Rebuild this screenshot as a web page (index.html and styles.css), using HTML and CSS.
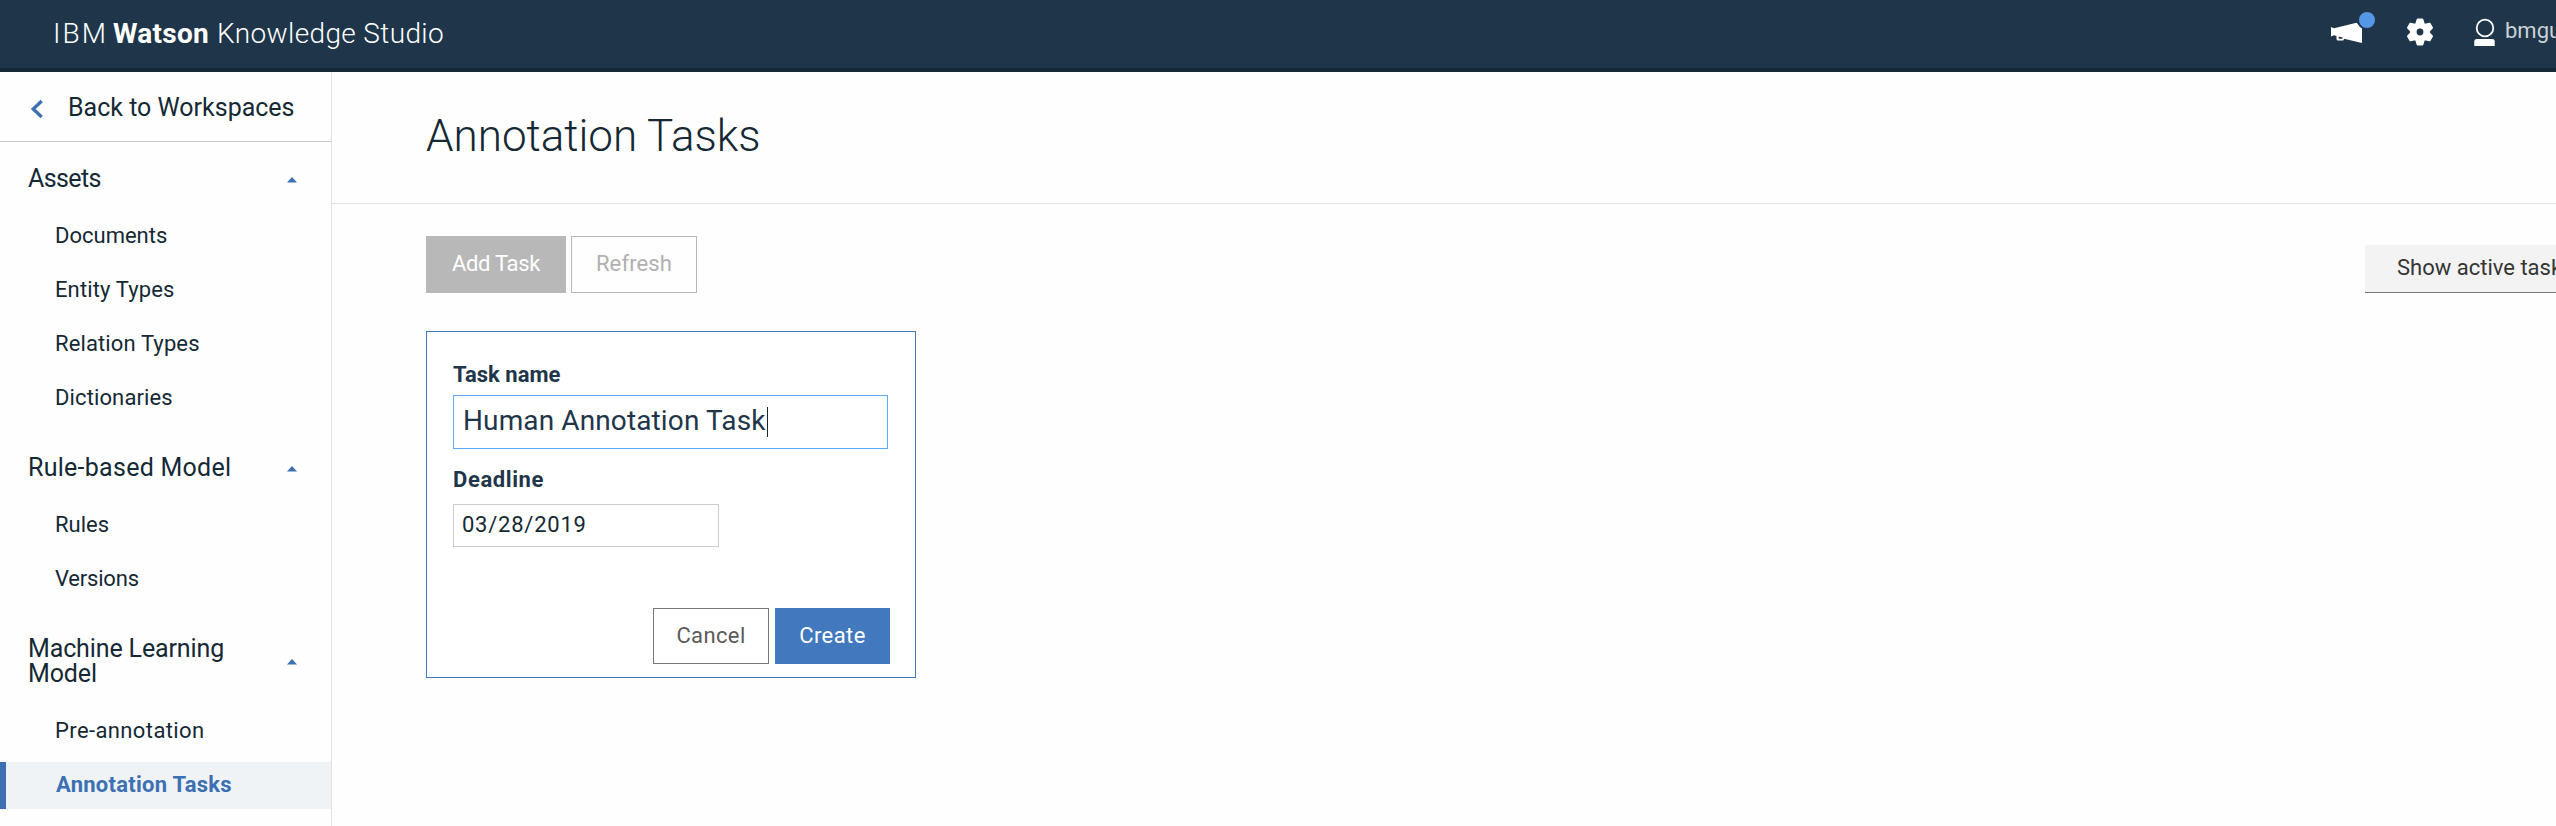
FILE: index.html
```
<!DOCTYPE html>
<html lang="en">
<head>
<meta charset="utf-8">
<title>IBM Watson Knowledge Studio</title>
<link rel="stylesheet" href="styles.css">
</head>
<body>
<header class="topbar">
  <div class="brand"><span class="brand-ibm">IBM</span><strong class="brand-watson">Watson</strong><span class="brand-product">Knowledge Studio</span></div>
  <div class="topbar-tools">
    <svg class="icon-news" width="50" height="40" viewBox="0 0 50 40">
      <path fill="#fff" d="M3 19l3 1.2L28.5 14.7 34 19v16L16 30.7V31q0 1.500-1.500 1.500h-4.500q-1.500 0-1.500-1.500v-3L6 27.300l-3 1.200z"/>
      <path fill="#1f364a" d="M10.700 28.500l3.800.9v1.300h-3.800z"/>
      <circle cx="39" cy="12" r="9" fill="#5596e6" stroke="#1f364a" stroke-width="2"/>
    </svg>
    <svg class="icon-gear" width="32" height="32" viewBox="-16 -16 32 32">
      <g fill="#fff">
        <circle r="9.600"/>
        <path id="teeth" d="M-2.500-13.500h5q.6 0 .8.800L4.800-8v16l-1.500 4.700q-.2.800-.8.800h-5q-.6 0-.8-.8L-4.800 8V-8l1.500-4.700q.2-.8.8-.8z"/>
        <use href="#teeth" transform="rotate(60)"/>
        <use href="#teeth" transform="rotate(120)"/>
      </g>
      <circle r="3.400" fill="#1f364a"/>
    </svg>
    <svg class="icon-user" width="24" height="30" viewBox="0 0 24 30">
      <circle cx="12" cy="10" r="8.300" fill="none" stroke="#fff" stroke-width="1.800"/>
      <path fill="#fff" d="M1.300 28v-4.500q0-2.500 2.500-2.500h15.400q2.500 0 2.500 2.500V28z"/>
    </svg>
    <span class="user-name">bmgu</span>
  </div>
</header>
<div class="layout">
  <nav class="sidebar">
    <a class="back">
      <svg class="back-icon" width="14" height="20" viewBox="0 0 14 20"><path d="M11.700 2L3.200 10l8.500 8" fill="none" stroke="#3d70b2" stroke-width="3.300"/></svg>
      <span>Back to Workspaces</span>
    </a>
    <h2 class="group group-first"><span class="group-tight">Assets</span><svg class="caret" width="10" height="6" viewBox="0 0 10 6"><path d="M0 5.500L5 0l5 5.500z"/></svg></h2>
    <ul class="items">
      <li class="item">Documents</li>
      <li class="item wide">Entity Types</li>
      <li class="item wide">Relation Types</li>
      <li class="item wide">Dictionaries</li>
    </ul>
    <h2 class="group"><span class="group-wide">Rule-based Model</span><svg class="caret" width="10" height="6" viewBox="0 0 10 6"><path d="M0 5.500L5 0l5 5.500z"/></svg></h2>
    <ul class="items">
      <li class="item">Rules</li>
      <li class="item tight">Versions</li>
    </ul>
    <h2 class="group"><span>Machine Learning Model</span><svg class="caret" width="10" height="6" viewBox="0 0 10 6"><path d="M0 5.500L5 0l5 5.500z"/></svg></h2>
    <ul class="items">
      <li class="item wider">Pre-annotation</li>
      <li class="item active">Annotation Tasks</li>
    </ul>
  </nav>
  <main class="main">
    <div class="page-head"><h1>Annotation Tasks</h1></div>
    <div class="toolbar">
      <button class="btn btn-add">Add Task</button>
      <button class="btn btn-refresh">Refresh</button>
      <div class="filter">Show active tasks</div>
    </div>
    <section class="card">
      <label class="label label-name">Task name</label>
      <div class="field field-name"><span>Human Annotation Task</span><i class="text-cursor"></i></div>
      <label class="label label-date">Deadline</label>
      <div class="field field-date">03/28/2019</div>
      <div class="actions">
        <button class="btn btn-cancel">Cancel</button>
        <button class="btn btn-create">Create</button>
      </div>
    </section>
  </main>
</div>
</body>
</html>
```
FILE: styles.css
```
* { box-sizing: border-box; }
html, body { height: 100%; }
body {
  margin: 0;
  display: flex;
  flex-direction: column;
  overflow: hidden;
  background: #fefefe;
  color: #152935;
  font-family: Roboto, "Liberation Sans", sans-serif;
  font-size: 22px;
}
h1, h2, ul { margin: 0; padding: 0; list-style: none; font-weight: 400; }

/* Top bar */
.topbar {
  flex: none;
  display: flex;
  height: 72px;
  background: #1f364a;
  border-bottom: 4px solid #152935;
  color: #fff;
  overflow: hidden;
}
.brand { display: flex; padding-left: 53px; font-size: 28px; line-height: 67px; font-weight: 300; white-space: nowrap; }
.brand-ibm { width: 60px; letter-spacing: 2px; }
.brand-watson { width: 104px; font-weight: 700; letter-spacing: .26px; }
.brand-product { letter-spacing: .36px; }
.topbar-tools { display: flex; align-items: flex-start; width: 228px; margin-left: auto; white-space: nowrap; }
.topbar-tools svg { flex: none; }
.icon-news { margin-top: 8px; }
.icon-gear { margin: 16px 0 0 26px; }
.icon-user { margin: 18px 0 0 37px; }
.user-name { margin-left: 8px; line-height: 61px; color: #ccd1d6; }

.layout { flex: 1; display: flex; min-height: 0; }

/* Sidebar */
.sidebar { flex: none; width: 332px; border-right: 1px solid #dfe3e6; }
.back {
  display: flex;
  align-items: center;
  height: 70px;
  padding: 2px 0 0 30px;
  border-bottom: 1px solid #c4c9cb;
  font-size: 25px;
}
.back-icon { margin: 3px 24px 0 0; }
.group {
  display: flex;
  align-items: center;
  justify-content: space-between;
  padding: 33px 34px 22px 28px;
  font-size: 25px;
  line-height: 25px;
}
.group-first { padding-top: 24px; }
.group span { width: 210px; letter-spacing: -.13px; }
.group .group-tight { letter-spacing: -.6px; }
.group .group-wide { letter-spacing: .27px; }
.caret { margin-top: 2px; fill: #3d70b2; }
.items { display: flex; flex-direction: column; gap: 7px; }
.item { height: 47px; padding-left: 55px; line-height: 45px; }
.item.wide { letter-spacing: .12px; }
.item.wider { letter-spacing: .39px; }
.item.tight { letter-spacing: -.2px; }
.item.active {
  padding-left: 50px;
  border-left: 6px solid #3d70b2;
  background: #eff3f6;
  color: #3d70b2;
  font-weight: 700;
  letter-spacing: .25px;
}

/* Main column */
.main { flex: 1; min-width: 0; }
.page-head { height: 132px; padding-left: 94px; border-bottom: 1px solid #dfe1e2; }
.page-head h1 { font-size: 44px; line-height: 128px; font-weight: 300; letter-spacing: 0; }
.toolbar { display: flex; gap: 5px; padding: 32px 0 0 94px; overflow: hidden; }
.btn {
  flex: none;
  padding: 0 0 2px;
  border: 1px solid;
  border-radius: 0;
  background: none;
  font: inherit;
}
.btn-add { width: 140px; height: 57px; background: #b8b8b8; border-color: #b8b8b8; color: #fff; letter-spacing: -.3px; }
.btn-refresh { width: 126px; height: 57px; border-color: #b8b8b8; color: #b0b0b0; letter-spacing: .14px; }
.filter {
  width: 191px;
  height: 48px;
  margin: 9px 0 0 auto;
  padding-left: 32px;
  border-bottom: 1px solid #777;
  background: #f3f3f3;
  color: #353535;
  line-height: 45px;
  white-space: nowrap;
  overflow: hidden;
}

/* Task form */
.card {
  display: flex;
  flex-direction: column;
  width: 490px;
  height: 347px;
  margin: 38px 0 0 94px;
  padding: 29px 25px 13px 26px;
  border: 1px solid #4178be;
  background: #fff;
  color: #1f364a;
}
.label { font-weight: 700; line-height: 28px; }
.label-name { letter-spacing: 0; }
.label-date { margin-top: 17px; letter-spacing: .6px; }
.field { display: flex; align-items: center; border: 1px solid #ccc; }
.field-name {
  width: 435px;
  height: 54px;
  margin-top: 6px;
  padding: 0 0 4px 9px;
  border-color: #5aaafa;
  font-size: 28px;
  letter-spacing: .12px;
}
.text-cursor { width: 1px; height: 30px; margin: 4px 0 0 1px; background: #152935; }
.field-date { width: 266px; height: 43px; margin-top: 10px; padding: 0 0 2px 8px; color: #152935; letter-spacing: .76px; }
.actions { display: flex; justify-content: flex-end; gap: 6px; margin-top: auto; }
.btn-cancel { width: 116px; height: 56px; border-color: #777; color: #5a5a5a; letter-spacing: .38px; }
.btn-create { width: 115px; height: 56px; background: #4178be; border-color: #4178be; color: #fff; letter-spacing: .42px; }
```
